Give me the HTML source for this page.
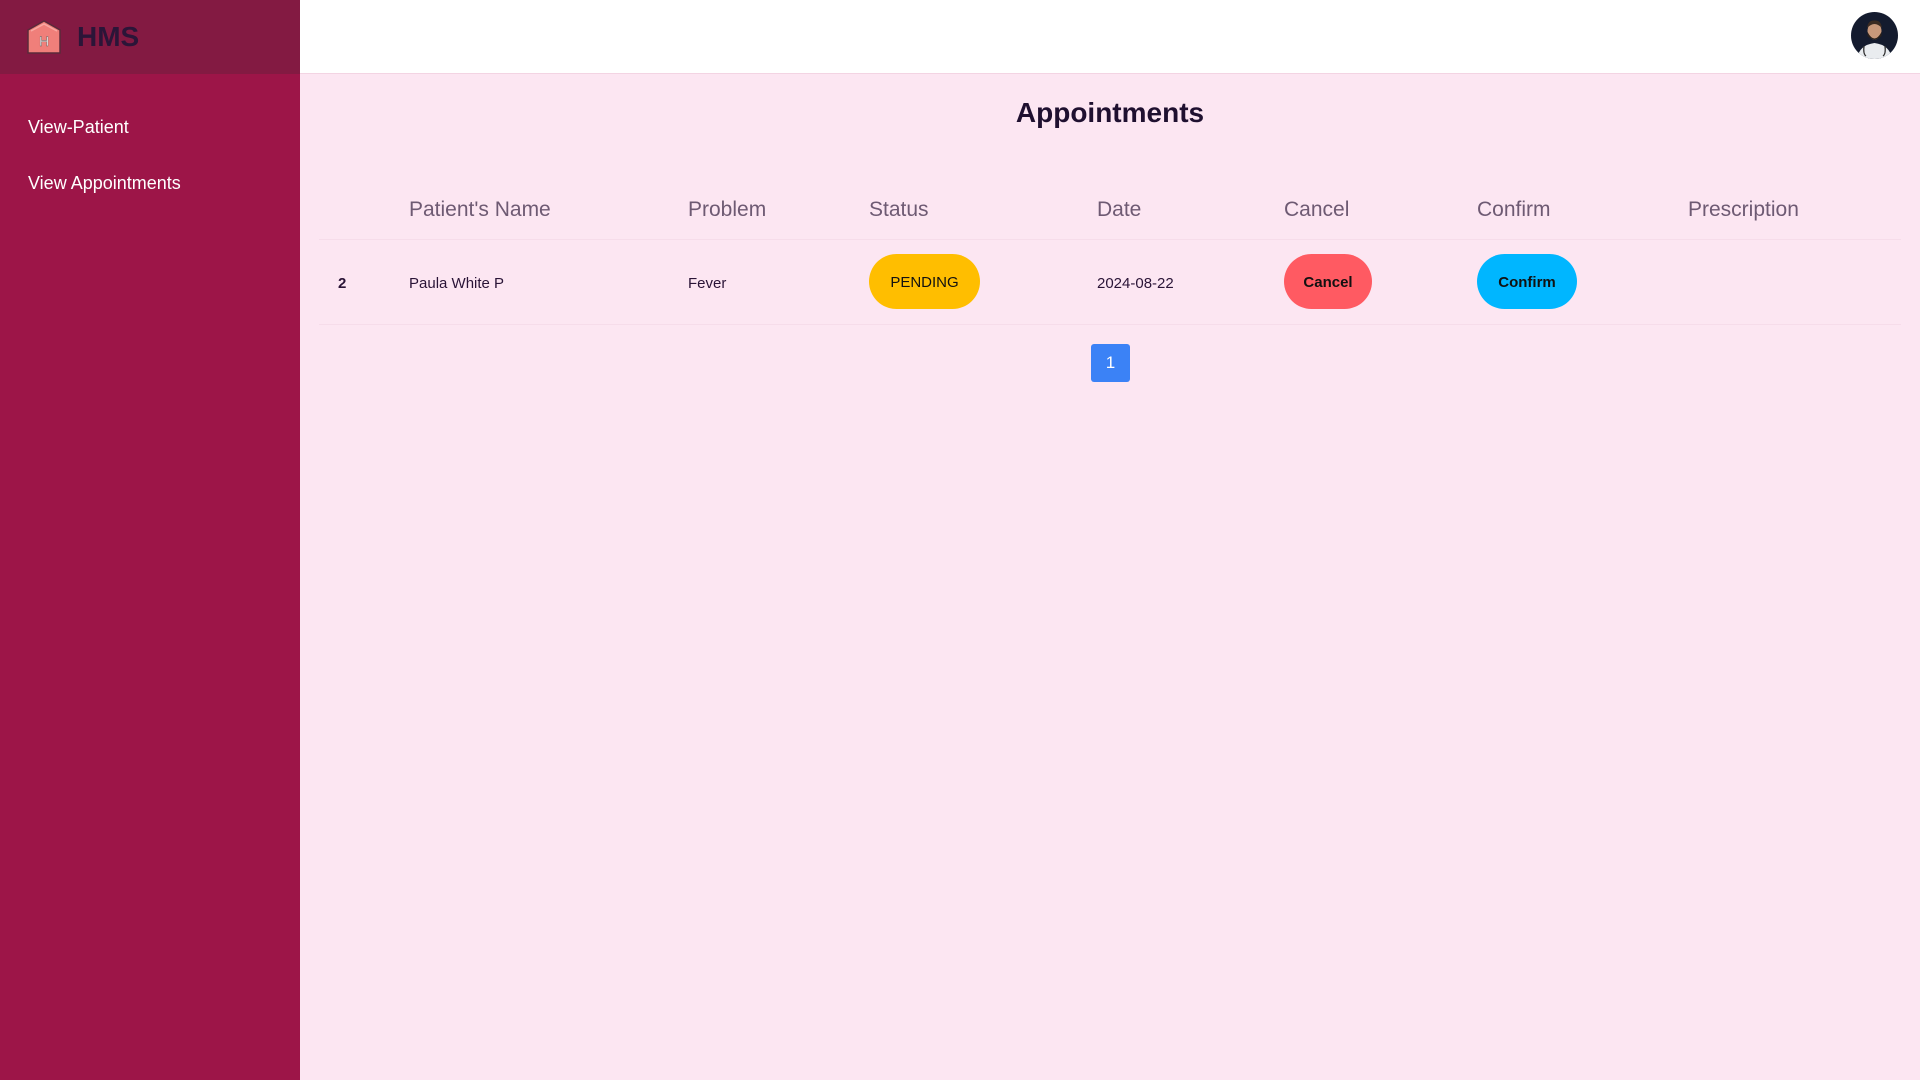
<!DOCTYPE html>
<html><head><meta charset="utf-8"><style>
*{margin:0;padding:0;box-sizing:border-box}
body{width:1920px;height:1080px;overflow:hidden;background:#fce6f2;font-family:"Liberation Sans",Arial,sans-serif;position:relative}
.a{position:absolute;white-space:nowrap}
#side{position:absolute;left:0;top:0;width:300px;height:1080px;background:#9d1548}
#logo{position:absolute;left:0;top:0;width:300px;height:74px;background:#831a42}
#top{position:absolute;left:300px;top:0;width:1620px;height:74px;background:#fff;border-bottom:1px solid #f3d4e3}
.nav{color:#fff;font-size:18px}
.th{color:#6e5a73;font-size:21px;top:198px}
.td{color:#2a1437;font-size:15px;top:275px}
.btn{position:absolute;top:254px;height:55px;border-radius:28px;display:flex;align-items:center;justify-content:center;font-size:15px;font-weight:bold;color:#111;padding-top:2px}
.line{position:absolute;left:319px;width:1582px;height:1px;background:#f6dcea}
</style></head><body>
<div id="side"></div>
<div id="logo">
<svg class="a" style="left:26px;top:19px" width="36" height="36" viewBox="0 0 36 36"><path d="M2 11 L18 2 L34 11 L34 34 L2 34 Z" fill="#f07f7a" stroke="#5a2a3a" stroke-width="1.5"/><path d="M5 12 L18 5 L31 12" fill="none" stroke="#f9a9a3" stroke-width="1.5"/><text x="18" y="27" font-size="14" font-family="Liberation Sans" fill="#fff" text-anchor="middle" stroke="#555" stroke-width="0.4">H</text></svg>
<div class="a" style="left:77px;top:21px;font-size:28px;font-weight:bold;color:#2b1538">HMS</div>
</div>
<div class="a nav" style="left:28px;top:117px">View-Patient</div>
<div class="a nav" style="left:28px;top:173px">View Appointments</div>
<div id="top"></div>
<svg class="a" style="left:1851px;top:12px" width="47" height="47" viewBox="0 0 47 47"><defs><clipPath id="c"><circle cx="23.5" cy="23.5" r="23.5"/></clipPath></defs><g clip-path="url(#c)"><rect width="47" height="47" fill="#141b2e"/><path d="M6 47 Q8 33 23.5 31 Q39 33 41 47 Z" fill="#e9ecef"/><ellipse cx="23.5" cy="19" rx="7" ry="8.5" fill="#c8987a"/><path d="M16.5 20 Q23.5 33 30.5 20 L30.5 24 Q23.5 31 16.5 24 Z" fill="#2a211c"/><path d="M16 16 Q17 8 23.5 8.5 Q30 8 31 16 Q27 12 23.5 12 Q20 12 16 16Z" fill="#3a2b22"/><path d="M13 34 Q12 42 15 44 M34 34 Q35 42 32 44" stroke="#333" stroke-width="1.3" fill="none"/></g></svg>
<div class="a" style="left:300px;width:1620px;top:97px;text-align:center;font-size:28px;font-weight:bold;color:#1f1030">Appointments</div>
<div class="a th" style="left:409px">Patient's Name</div>
<div class="a th" style="left:688px">Problem</div>
<div class="a th" style="left:869px">Status</div>
<div class="a th" style="left:1097px">Date</div>
<div class="a th" style="left:1284px">Cancel</div>
<div class="a th" style="left:1477px">Confirm</div>
<div class="a th" style="left:1688px">Prescription</div>
<div class="line" style="top:239px"></div>
<div class="a td" style="left:338px;font-weight:bold">2</div>
<div class="a td" style="left:409px">Paula White P</div>
<div class="a td" style="left:688px">Fever</div>
<div class="btn" style="left:869px;width:111px;background:#ffbe00;font-weight:normal;color:#111">PENDING</div>
<div class="a td" style="left:1097px">2024-08-22</div>
<div class="btn" style="left:1284px;width:88px;background:#ff5a62">Cancel</div>
<div class="btn" style="left:1477px;width:100px;background:#00b6ff">Confirm</div>
<div class="line" style="top:324px"></div>
<div class="a" style="left:1091px;top:344px;width:39px;height:38px;background:#3b82f6;border-radius:3px;color:#fff;font-size:17px;display:flex;align-items:center;justify-content:center">1</div>
</body></html>
